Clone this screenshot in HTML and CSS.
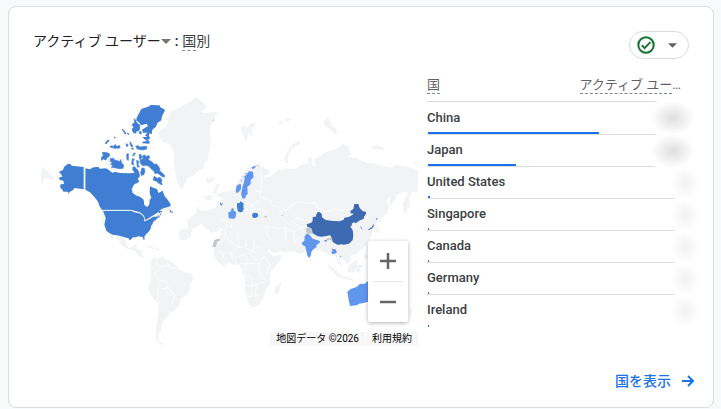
FILE: index.html
```html
<!DOCTYPE html>
<html lang="ja">
<head>
<meta charset="utf-8">
<meta name="viewport" content="width=device-width, initial-scale=1">
<title>アクティブ ユーザー : 国別</title>
<link rel="stylesheet" href="styles.css">
</head>
<body>
<main class="card">
  <header class="card-header">
    <h2 class="title">
      <button class="metric" type="button">アクティブ ユーザー<svg class="caret" viewBox="0 0 10 5" aria-hidden="true"><path d="M0 0h10L5 5z"/></svg></button>
      <span class="colon">:</span>
      <span class="dimension"><span class="hint">国</span>別</span>
    </h2>
    <button class="status" type="button" aria-label="データの品質">
      <svg class="check" viewBox="0 0 18 18" aria-hidden="true"><circle cx="9" cy="9" r="7.7"/><path d="M4.8 9.3l2.8 2.8 5.8-6"/></svg>
      <svg class="status-caret" viewBox="0 0 10 5" aria-hidden="true"><path d="M0 0h10L5 5z"/></svg>
    </button>
  </header>

  <div class="content">
    <section class="map" aria-label="地図">
      <svg class="world" viewBox="-3 0 1155 798" aria-hidden="true">
        <!-- Greenland, Iceland, Svalbard -->
        <g class="land" transform="translate(288 0)">
          <path d="M177 66l10-5 4-7 12 1 10 9 12 9 4 9-17 13 12 5 20-3 12-2 7 4-8 10-1 9-8 11-6 10-1 18 3 12-1 26-4 16-3 30-10 7-3 19-17 6-12 13-21 8-9 24-6 8-8-5-6-14-4-17-3-22-4-24 2-22-6-17-8-12-20-7-12-13 3-9-7-2 11-12 14-11 6-15-4-11 9-6 4-13 22-8z"/>
          <path d="M228 292l10 3 15-4 3 8-9 7-10 3-9-7z"/>
          <path d="M334 139l14-2 4 7 8-12 15-3 2 9-12 4 2 12 3 7-5 7-5 4 1-13-6 1-3 10-3 14-7-8-1-13-8-7z"/>
        </g>
        <!-- Chukotka strip and Arctic shores -->
        <g class="land" transform="translate(-12 15)">
          <path d="M33 247l7 1 12 10 12 13 10 6-5 9-14-8-14 4-4 17h-4zM40 233l9-2v3z"/>
          <path d="M215 205l18-8 14 20 38 6-4 28-40 4zM326 208l30 2 52 68-8 2-34-42-36-2z"/>
          <path d="M162 306l20 4 18 20 16 40 4 5-12-16-14-28-20-16-28-6-26 12 10-12z"/>
          <path d="M338 366l22 2 8-24 8 4-2 20-12 8-20-2zM400 330l12 8 10 24 2 18-20 2z"/>
        </g>
        <!-- Mexico, Central America and the Caribbean -->
        <g class="land" transform="translate(138 255)">
          <path d="M72 198l24 8 20 2 14 8 6 6 3 14 7 12 12-3 6-7h8l-4 11 4 5 13 1-2 13 10 7-4 3-14-6-10-13-14-5-15-5-13-11-6-12-10-10-8-15h-6l8 18-4 1-13-19zM194 240l16 3 14 8-4 2-24-10zM227 252l14 1v3l-14-1zM68 140l4 2-2 46-5-22zM214 178l10-16 4 2-12 30z"/>
        </g>
        <!-- South America and Africa -->
        <g class="land" transform="translate(288 420)">
          <path d="M61 123l10-9 7-4 3 5 18-4 9 8 19 8 14 10 8 13 15 6 22 5 5 12-10 17-2 19-8 17-17 8-5 16-8 13-8 10-12 3-5 11-13 9-8 16-1 14-7 14-3 14 3 10 14 9-6 2-12-7-6-14 1-30 4-22 3-28-1-25-11-9-12-20-7-17 4-12 5-9z"/>
          <path d="M273 32l14-8 27-3 7 13 16 4 10-4 15 4 22 1 5 11 14 31 12 16 14 11 27-4-7 19-17 20-11 15-1 16 2 18-10 9-7 17-6 18-11 16-13 9-12 1-6-9-6-20-4-14-4-25 4-12-8-17-5-21-7-10-15 1-15-6-17 9-15-11-13-19-1-27 8-20 15-16z"/>
          <path d="M451 184l2 11-7 25-9 4-5-8 3-15 9-7z"/>
          <path d="M373 27l34-3 23 5 17 12 15 9 18 4-8 20-18 17-24 9-10-9-14-28-11-17-10-4-12-10zM100 330l15-1-2 2zM272 0h21l4 9-7 12-15 5-3-6zM57 78l15 4 14 4-4 2-24-8z"/>
          <path class="line" d="M78 112l2 19 10 9 25-3M81 131l-10 9-7 13M90 140l-1 10-12 3-1 14 12 13 22 6 5 17 9 10 10 15-10 23M88 180l-3 26-2 66M112 128l8 16 12 1 14-7M115 203l-11 3-16-3M104 208l18 18M287 27l-1 23-24 28M290 56l34 24-21 22M319 28l9 56 23-9M349 40l-1 44 35 17M371 40l1 41h31M372 81l-11 22 17 15 24-4M303 102l14 11 1 20M282 100l19-4 9 23M267 95l15 5-6 22M318 113l28-12 7 28-16 20M321 134l32-5 35 3 13-23 20 23-14 32M347 132l-4 34-8 8M388 132l3 40 20 9M338 168l25 2 6 27h-30M369 197l14-5 26-7M366 200v29h-20M383 192l-11 37 19-6M399 43l8 13 15-1 2-24M424 55l20 10-6 16-22 3"/>
        </g>
        <!-- Europe and Asia -->
        <g class="land" transform="translate(528 30)">
          <path d="M75 300l16-39 21-26 20-11 15-2 3 7 27 11 6 10-20 6 4 9 22-10 13-16 15 2 11-6 27 2 18-13 22-3-1-17 9-4 4 10 1 22 6-3-1-24 12-2 12-12 17-6 25-9 12-8 8-6 18 9 6 21-12 9 29 4 28 13 29 3 20 7 29 5 12-9 40 8 33 15 25 3 15 12-3 10-8-3-15 10 3 16-16 7-28 5-9 17 4 22-10 20-7 6-4-31 7-17 10-17-15-2-18 9-20 5-12 13 7 18-6 21-17 12-6 9-10 8 4 15 8 9-6 6-8-10-5-15-12 2 8 19-7 23-23 29-23 17-16 2 5 13-10 13-16-18-16-7-20-2-29-15-30-2-30 12-26-7-23 4-26-15-26 8-18-10 4-17-23-5-28-3-12-17-22-8-9-18-7 16-24-5-8 10-23 6-6-12-10-4-11-15-8 9-20 9-3 22-15 11-20-2-2-18 6-12 24-4-5-19 13-15 16-13-1-15 6-2 3 10 13 4 26-6 14-7 1-14 8-5 11-3-5-8-13-2-3-17 8-17-4-7-11 16-4 18-6 17-13 3-11-13z"/>
          <path d="M44 311l6 4 3 15 9 10-1 7-16 3 4-14-8-7zM36 334l4 0 0 9-9 6-2-9z"/>
          <path d="M222 208l7-20 12-18 15-12 15-5-2 8-23 14-10 18-4 18 4 8-10 1zM343 92l9-11 8 8 3 17 12 8 7 13-6 8-10-13-14-10-10-9zM485 169l16-4 20 10 2 5-23-2-10 3zM206 96l10-4 2 9-10 3zM225 88l14-3 6 2-8 5-12 3zM612 216l9 1-3 4-7-1zM544 285l14 16 2 21-9 14-12 12 1-21 7-14z"/>
          <path d="M492 369l5 13-2 18-8 18-14 5-11-1 18-12 7-14zM485 392l12-14 2 13-8 8zM418 454l3-12 5 5-4 12z"/>
          <path class="line" d="M151 243l3 20 2 35-9 7M154 306l-22-3M147 305l7 16-9 16-17 6-4 17 30-4 17 12M154 321l28 11 2 14 25 6M100 338l21 4 7 9M101 356l23 9 17 13 17-8M110 363l2 18M124 365l-3 16M34 388l17 4-1 24M211 382l-1-17 28-9 7-12 27-10 15 6 28-2 9 17 18 3 5 11M341 369l35-13 32 8 13-9 15 2M211 382l20 18 18-4 24 18 25-10M249 396l13-13 20 10 22-3M155 390l16 20 37 5M208 415l17-3 26 13 20-9 19 11M171 410l-2 23 16 14M225 412l3 43M251 425l3 29 20-15 16-9"/>
        </g>
        <!-- Southeast Asia and New Zealand -->
        <g class="land" transform="translate(798 330)">
          <path d="M75 150l12 8 17 17 4 17 10 20 9 16-6-1-10-16-9-19-9-12-5 9-16-17zM82 219l17 14 18 16 9 12-7 2-17-13-15-18zM125 258l20 4 17 6-4 4-31-9zM143 229l16-12 12-7-1 19-9 19-17-3zM171 226l20-2-3 6-9 6 5 13-9-3-2 10-5-18zM190 198l8-9 6 13-7 6zM155 167l6 7 3 16-7-7zM330 352l6 9-3 11-4 4zM300 395l15 3-14 5zM195 258l9-3v4zM42 205l5 6-3 6z"/>
        </g>
        <g class="disputed">
          <path d="M816 445l16-3 5 7-2 11-8 2-11-5z"/>
          <path d="M876 476l16-3 3 5-6 3-10-1zM535 501l5-20 9-4 9-1-1 6-8 3-3 16zM691 409l6-1 4 3-10 2zM740 405l8-1-3 4zM534 122l5-4-1 6z"/>
        </g>
        <!-- Alaska and Ellesmere Island -->
        <g class="mid" transform="translate(-12 15)">
          <path d="M88 260L99 255 102 246 114 236 122 238 125 242 139 244 161 246V313L140 310 134 308 128 316 120 320 112 331 116 323 112 320 100 320 97 314 90 307 92 298 102 297 100 287 88 284 88 277 97 275 93 266 88 264z"/>
          <path d="M420 375l3 1-1 3 7 1-1 3-8-1zM334 72l24-8 3-4 27 1 5 7 8 3 4 5-9 18-2 12-11 7-6 13-10 8-2 14-6-3-3 8 5 5-7 7 5 5-1 6-21-1 1-5 14-3-10-5-4-6h14l-7-5 8-8h-14l-3-9 12-7 6-3-4-8-18 5-3-7-10-8 1-8z"/>
        </g>
        <!-- Canadian Arctic islands -->
        <g class="mid islands" transform="translate(-12 15)">
          <path d="M312 101l5 4 3 8 9 7v14l-7 5-4-2v8l-9-3-3-11 6-3-6-8 4-5 4-3zM327 141l5-2 3 6-5 2zM276 132l4 2 8 11-2 3zM291 144l6 2-1 3zM253 156l3 1-2 3zM230 168l7-3v3l-7 5-1 4-3-2zM240 184l7-2 1 4 8-8 1 5 13 2-1 4-14 1-13-3zM264 182l5 0v6l-5-1zM289 176l6 4-3 5-3-2zM300 170l5 7 3 5-2 4-5-6zM304 190l5-2 1 5-6-2zM317 184l8-2 3 4 22-2v8l-13 3-15-3z"/>
          <path d="M217 202L230 203 239 207 237 215 230 218 228 225 220 222 214 226 215 216 220 212zM241 221L250 220 254 226 265 228 270 231 272 224 275 235 281 240 279 250 268 251 256 248 244 247 250 242 242 238 247 233 241 229z"/>
          <path d="M290 207l5-1v20l-4-2zM311 205l5-1-3 7-5 2zM307 221l6 2-4 8 2 9-6-3zM320 226L326 229 324 240 329 244 322 247zM327 210L332 208 336 217 330 224z"/>
          <path d="M338 212L345 210 348 216 356 211 359 218 354 223 359 227 366 231 372 238 380 237 386 245 390 252 388 257 396 263 403 270 403 276 395 274 387 267 381 264 375 266 372 258 363 251 356 243 347 241 338 242 331 234 330 225 339 222zM335 250L342 249 345 257 342 268 335 272 332 264zM372 274L382 280 390 277 396 285 394 293 397 300 386 295 379 288 370 286z"/>
        </g>
        <!-- Canadian mainland and the contiguous states -->
        <g class="mid" transform="translate(138 255)">
          <path d="M16 10L30 13 40 7 56 6 59 11 76 10 84 13 90 18 98 24 104 20 120 24 150 25 164 23 157 14 158 6 164 4 168 10 174 14 178 24 180 34 173 42 178 50 170 55 163 58 155 72 158 84 170 92 180 95 191 104 193 120 202 126 208 118 209 104 214 98 209 85 210 64 220 68 231 72 235 84 248 77 254 94 263 104 272 118 271 124 250 130 237 137 246 138 243 152 236 141 220 151 205 160 193 168 190 152 180 142 157 136 66 136 58 122 54 110 45 98 30 82 16 74z"/>
          <path d="M69 137h88l5 3 11 3 7 1 11 9 3 14 16-8 10-5 9-1 5-2 4-2 1 7-7 4-5 5-6 4-4 8-4 7-1 8-7 9-7 7-5 7 1 8-3 2-3-9-15-2-4 3-10 0-7 7-3 2-4-7-7-1-9-3-17-4-14-2-10-5-9-7-6-18 4-20z"/>
          <path class="state" d="M66 136h88l8 4 14 3 13 7 5 10v8l18-9 7-5 17-1 7-12 3 11M14 8v66"/>
        </g>
        <g transform="translate(528 30)">
          <path class="pale" d="M118 243l11 3 2 16-9 8v12l-10 8 1 22-6 5-1 8-8 1-5-14 5-24 4-11 3-18zM79 289l7-6h7v14l-6 8-7 5-3-8zM92 273l4-6-1 8zM99 263l4-7 1 5zM105 252l4-5 1 4zM125 232l8-3 5-1-4 7-8 2zM142 225l4 1-3 3zM55 366l7-1 3-10 5 0 2 8 7 3-1 8-2 10-5 2-15-1z"/>
          <path class="mid" d="M81 340l7-1 4-5 4 3 5 3-1 13 2 2-3 6-2 5-8 1-6-5-2-11zM126 373l6-5 11 2 2 9-7 5-10-1zM30 340l3-3v5l5-3-1 5-4 3z"/>
        </g>
        <!-- East and South Asia, Australia -->
        <g transform="translate(798 330)">
          <path class="dark" d="M20 103L34 98 38 92 38 81 47 80 51 68 57 65 65 71 66 82 77 90 99 93 119 94 131 89 133 83 146 81 158 74 161 71 151 70 152 62 160 57 163 42 175 42 179 54 188 63 198 66 198 72 192 80 191 87 180 91 167 100 162 97 155 101 156 106 151 110 158 120 160 136 158 150 147 161 131 164 124 163 112 164 98 156 96 146 91 136 79 138 66 140 53 139 38 130 35 115 22 110z"/>
          <path class="pale" d="M14 138L22 130 31 137 38 146 60 153 58 160 50 164 49 172 40 178 34 186 33 195 28 204 22 197 19 182 15 168 8 166 5 158 13 153zM72 151l8-2 2 5-7 1zM94 174l5 4 7-1 5 10-6 4-8 1-3-6 4-3zM120 197l4 2-2 4zM181 107l4 6 2 5-4-1zM110 164l7-1-1 3z"/>
          <path class="dark" d="M227 86l5-2-2 6zM221 101v8l-4 6-8 4-6 1 5-4 7-4z"/>
          <path class="pale" d="M142 305L152 297 170 291 180 281 193 282 203 274H230V335H205L194 338 178 341 170 346 150 348 146 330z"/>
        </g>
      </svg>
      <div class="zoom">
        <button class="zoom-button" type="button" aria-label="ズームイン"><svg viewBox="0 0 18 18" aria-hidden="true"><path d="M9 1v16M1 9h16"/></svg></button>
        <button class="zoom-button" type="button" aria-label="ズームアウト"><svg viewBox="0 0 18 18" aria-hidden="true"><path d="M1 9h16"/></svg></button>
      </div>
      <div class="credits"><span class="credit">地図データ ©2026</span><a class="credit" href="#">利用規約</a></div>
    </section>

    <table class="countries">
      <thead><tr><th scope="col"><span class="hint">国</span></th><th class="value" scope="col"><span class="hint">アクティブ ユー</span>…</th></tr></thead>
      <tbody>
        <tr><th scope="row">China<span class="bar" style="width:65.3%"></span></th><td class="value"><span class="mask wide"></span></td></tr>
        <tr><th scope="row">Japan<span class="bar" style="width:33.6%"></span></th><td class="value"><span class="mask wide"></span></td></tr>
        <tr><th scope="row">United States<span class="bar" style="width:0.8%"></span></th><td class="value"><span class="mask"></span></td></tr>
        <tr><th scope="row">Singapore<span class="bar" style="width:0.4%"></span></th><td class="value"><span class="mask"></span></td></tr>
        <tr><th scope="row">Canada<span class="bar" style="width:0.4%"></span></th><td class="value"><span class="mask"></span></td></tr>
        <tr><th scope="row">Germany<span class="bar" style="width:0.4%"></span></th><td class="value"><span class="mask"></span></td></tr>
        <tr><th scope="row">Ireland<span class="bar" style="width:0.4%"></span></th><td class="value"><span class="mask"></span></td></tr>
      </tbody>
    </table>
  </div>

  <footer class="card-footer">
    <a class="more" href="#">国を表示<svg viewBox="0 0 14 14" aria-hidden="true"><path d="M1 7h11M7 2l5 5-5 5"/></svg></a>
  </footer>
</main>
</body>
</html>
```
FILE: styles.css
```css
* {
  box-sizing: border-box;
}

body {
  margin: 0;
  padding: 6px 7px 1px 8px;
  background: #f8f9fb;
  color: #202124;
  font: 14px/20px Roboto, "Noto Sans CJK JP", sans-serif;
}

button {
  margin: 0;
  padding: 0;
  border: 0;
  background: none;
  color: inherit;
  font: inherit;
  cursor: pointer;
}

a {
  color: inherit;
  text-decoration: none;
}

.card {
  padding: 24px 24px 16px;
  border: 1px solid #dadce0;
  border-radius: 8px;
  background: #fff;
}

.card-header {
  display: flex;
  align-items: center;
  justify-content: space-between;
}

.title {
  display: flex;
  align-items: center;
  gap: 4px;
  margin: 0 0 8px;
  font-size: 14px;
  font-weight: 400;
}

.metric {
  display: flex;
  align-items: center;
}

.caret,
.status-caret {
  width: 10px;
  height: 5px;
  fill: #757575;
}

.colon {
  font-weight: 500;
}

.dimension {
  color: #3c4043;
}

.hint {
  padding-bottom: 1px;
  border-bottom: 1px dashed #80868b;
}

.status {
  display: flex;
  align-items: center;
  justify-content: space-between;
  width: 60px;
  height: 28px;
  padding: 0 11px 0 7px;
  border: 1px solid #dadce0;
  border-radius: 14px;
}

.status-caret {
  width: 9px;
  fill: #5f6368;
}

.check {
  width: 18px;
  height: 18px;
  fill: none;
  stroke: #137333;
  stroke-width: 2;
}

.content {
  display: grid;
  grid-template-columns: minmax(0, 385fr) minmax(0, 262fr);
  gap: 9px;
  align-items: start;
  padding-top: 10px;
}

.map {
  position: relative;
  margin-top: 11px;
}

.world {
  display: block;
  width: 100%;
  height: auto;
}

.land {
  fill: #f1f3f4;
}

.line {
  fill: none;
  stroke: #fff;
  stroke-width: 2;
  stroke-linejoin: round;
}

.disputed {
  fill: #c4c6c8;
}

.mid {
  fill: #407ed3;
}

.islands {
  stroke: #407ed3;
  stroke-width: 2;
}

.pale {
  fill: #6196ee;
}

.dark {
  fill: #3e6ab1;
}

.state {
  fill: none;
  stroke: #f1f3f4;
  stroke-width: 3;
}

.zoom {
  position: absolute;
  right: 10px;
  bottom: 24px;
  width: 40px;
  padding: 0 5px;
  border-radius: 2px;
  background: #fff;
  box-shadow: 0 1px 4px rgba(0, 0, 0, 0.3);
}

.zoom-button {
  display: flex;
  align-items: center;
  justify-content: center;
  width: 100%;
  height: 40px;
}

.zoom-button + .zoom-button {
  height: 41px;
  border-top: 1px solid #e6e6e6;
}

.zoom-button svg {
  width: 18px;
  height: 18px;
  stroke: #666;
  stroke-width: 2.5;
}

.credits {
  position: absolute;
  right: 0;
  bottom: 0;
  display: flex;
  gap: 1px;
  color: #000;
  font-size: 10px;
  line-height: 14px;
}

.credit {
  padding: 0 6px;
  background: #f7f7f7;
}

.countries {
  width: 100%;
  border-collapse: collapse;
  color: #5f6368;
  font-size: 13px;
}

.countries th,
.countries td {
  padding: 0;
  font-weight: 400;
  text-align: left;
}

.countries tr {
  position: relative;
  height: 32px;
  border-bottom: 1px solid #dadce0;
}

.countries tbody tr:first-child {
  height: 33px;
}

.countries tbody tr:last-child {
  border-bottom: 0;
}

.countries tbody th {
  color: #3c4043;
  font-weight: 500;
}

.countries .value {
  text-align: right;
}

.countries thead .value {
  padding-right: 8px;
}

.bar {
  position: absolute;
  bottom: -1px;
  left: 1px;
  height: 2px;
  background: #1a73e8;
}

.mask {
  position: absolute;
  top: 0;
  right: -10px;
  width: 28px;
  height: 34px;
  border-radius: 8px;
  background: radial-gradient(closest-side, #f1f1f1, #fff);
}

.mask.wide {
  right: -6px;
  width: 44px;
  background: radial-gradient(closest-side, #dedede, #f4f4f4 65%, #fff);
}

.card-footer {
  display: flex;
  justify-content: flex-end;
  margin-right: -6px;
  padding-top: 25px;
}

.more {
  display: flex;
  align-items: center;
  gap: 10px;
  color: #1a73e8;
  font-weight: 500;
}

.more svg {
  width: 14px;
  height: 14px;
  fill: none;
  stroke: currentColor;
  stroke-width: 2;
}
```
